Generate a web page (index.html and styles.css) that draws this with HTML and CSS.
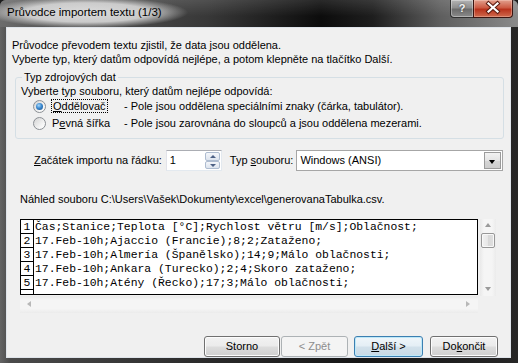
FILE: index.html
```html
<!DOCTYPE html>
<html lang="cs">
<head>
<meta charset="UTF-8" />
<meta name="viewport" content="width=device-width, initial-scale=1" />
<title>Průvodce importem textu (1/3)</title>
<link rel="stylesheet" href="styles.css">
</head>
<body>

<div class="window">
  <div class="titlebar">
    <span class="title">Průvodce importem textu (1/3)</span>
    <div class="caption-buttons">
      <span class="cap-help">?</span>
      <span class="cap-close">
        <svg width="40" height="18" viewBox="0 0 40 18">
          <path d="M15.5 4.5 L24.5 12.5 M24.5 4.5 L15.5 12.5" stroke="#5b1c12" stroke-width="4.2" stroke-linecap="square" />
          <path d="M15.5 4.5 L24.5 12.5 M24.5 4.5 L15.5 12.5" stroke="#ffffff" stroke-width="2.2" stroke-linecap="square" />
        </svg>
      </span>
    </div>
  </div>

  <div class="client">
    <div class="intro">
      <div>Průvodce převodem textu zjistil, že data jsou oddělena.</div>
      <div>Vyberte typ, který datům odpovídá nejlépe, a potom klepněte na tlačítko Další.</div>
    </div>

    <fieldset class="group">
      <legend>Typ zdrojových dat</legend>
      <div class="group-hint">Vyberte typ souboru, který datům nejlépe odpovídá:</div>
      <div class="option">
        <span class="radio checked"></span>
        <span class="opt-label"><span class="focus"><u>O</u>ddělovač</span></span>
        <span class="opt-desc">- Pole jsou oddělena speciálními znaky (čárka, tabulátor).</span>
      </div>
      <div class="option">
        <span class="radio"></span>
        <span class="opt-label">P<u>e</u>vná šířka</span>
        <span class="opt-desc">- Pole jsou zarovnána do sloupců a jsou oddělena mezerami.</span>
      </div>
    </fieldset>

    <div class="start-row">
      <span class="start-label"><u>Z</u>ačátek importu na řádku:</span>
      <div class="spin">
        <span class="spin-value">1</span>
        <div class="spin-buttons">
          <span class="spin-up"></span>
          <span class="spin-down"></span>
        </div>
      </div>
      <span class="type-label">Typ <u>s</u>ouboru:</span>
      <div class="combo">
        <span class="combo-value">Windows (ANSI)</span>
        <span class="combo-arrow"></span>
      </div>
    </div>

    <div class="preview-label">Náhled souboru C:\Users\Vašek\Dokumenty\excel\generovanaTabulka.csv.</div>

    <div class="preview">
      <div class="preview-main">
        <div class="preview-box">
          <div class="row"><span class="num">1</span><span class="line">Čas;Stanice;Teplota [°C];Rychlost větru [m/s];Oblačnost;</span></div>
          <div class="row"><span class="num">2</span><span class="line">17.Feb-10h;Ajaccio (Francie);8;2;Zataženo;</span></div>
          <div class="row"><span class="num">3</span><span class="line">17.Feb-10h;Almería (Španělsko);14;9;Málo oblačnosti;</span></div>
          <div class="row"><span class="num">4</span><span class="line">17.Feb-10h;Ankara (Turecko);2;4;Skoro zataženo;</span></div>
          <div class="row"><span class="num">5</span><span class="line">17.Feb-10h;Atény (Řecko);17;3;Málo oblačnosti;</span></div>
          <div class="row"><span class="num"></span><span class="line"></span></div>
        </div>
        <div class="hscroll">
          <span class="arrow-left"></span>
          <span class="arrow-right"></span>
        </div>
      </div>
      <div class="vscroll">
        <span class="arrow-up"></span>
        <span class="thumb"></span>
        <span class="arrow-down"></span>
      </div>
    </div>

    <div class="buttons">
      <span class="btn btn-cancel">Storno</span>
      <span class="btn btn-back disabled">&lt; Zpět</span>
      <span class="btn btn-next default"><u>D</u>alší &gt;</span>
      <span class="btn btn-finish">Do<u>k</u>ončit</span>
    </div>
  </div>
</div>

</body>
</html>
```

FILE: styles.css
```css
* {
  box-sizing: border-box;
}
body {
  margin: 0;
  background: #1c1c1c;
  font-family: "Liberation Sans", Arial, sans-serif;
  font-size: 11px;
  line-height: 13px;
  color: #000;
}
u {
  text-decoration-thickness: 1px;
  text-underline-offset: 1px;
}

/* window frame */
.window {
  width: 518px;
  height: 363px;
  display: flex;
  flex-direction: column;
  overflow: hidden;
  border-radius: 6px 6px 0 0;
  background: linear-gradient(to right, #646464 0, #4a4a4a 2%, #2a2a2a 40%, #151515 70%, #262626 100%);
}
.titlebar {
  height: 27px;
  flex: none;
  display: flex;
  justify-content: space-between;
  align-items: flex-start;
  position: relative;
  isolation: isolate;
  background:
    linear-gradient(to bottom, rgba(255,255,255,0.12), rgba(255,255,255,0) 60%),
    linear-gradient(to right, #6c6c6c 0, #5a5a5a 8%, #383838 40%, #0c0c0c 62%, #1e1e1e 72%, #5e5e5e 85%, #8a8a8a 100%);
}
.title {
  position: relative;
  margin: 5px 0 0 7px;
  font-size: 11.5px;
  line-height: 15px;
  color: #000;
}
.title::before {
  content: "";
  position: absolute;
  left: -22px;
  right: -26px;
  top: -8px;
  bottom: -8px;
  z-index: -1;
  background: radial-gradient(closest-side, rgba(222,222,222,0.98) 0, rgba(215,215,215,0.9) 62%, rgba(200,200,200,0) 100%);
}
.caption-buttons {
  display: flex;
  margin-right: 5px;
}
.cap-help {
  width: 23px;
  height: 18px;
  border: 1px solid #303030;
  border-top: none;
  border-right: none;
  border-radius: 0 0 0 4px;
  background: linear-gradient(to bottom, #b4b4b4 0, #8e8e8e 45%, #6c6c6c 55%, #8a8a8a 100%);
  box-shadow: inset 0 0 0 1px rgba(255,255,255,0.35);
  color: #f4f4f4;
  font-weight: bold;
  font-size: 11px;
  line-height: 17px;
  text-align: center;
  text-shadow: 0 0 2px #333;
}
.cap-close {
  width: 40px;
  height: 18px;
  border: 1px solid #3a1410;
  border-top: none;
  border-radius: 0 0 4px 0;
  background: linear-gradient(to bottom, #e2a08e 0, #cc5a43 45%, #b8321c 55%, #cf6a4e 100%);
  box-shadow: inset 0 0 0 1px rgba(255,220,210,0.35);
}
.cap-close svg {
  display: block;
  margin: -1px 0 0 -1px;
}

/* client area */
.client {
  flex: 1;
  margin: 0 7px 6px 6px;
  border: 1px solid #dfe4ea;
  background: #f0f0f0;
}
.intro {
  margin: 10px 0 0 5px;
  line-height: 14px;
}

.group {
  margin: 5px 6px 0 8px;
  padding: 1px 0 6px 5px;
  border: 1px solid #d5dfe5;
  border-radius: 3px;
  min-width: 0;
}
.group legend {
  padding: 0 2px;
  margin-left: 1px;
  line-height: 13px;
}
.group-hint {
  line-height: 13px;
}
.option {
  display: flex;
  align-items: center;
  height: 17px;
}
.radio {
  width: 13px;
  height: 13px;
  margin-left: 12px;
  border-radius: 50%;
  border: 1px solid #8b8f94;
  background: linear-gradient(135deg, #d4d4d4, #f6f6f6 70%, #ffffff);
  position: relative;
}
.radio.checked::after {
  content: "";
  position: absolute;
  left: 2px;
  top: 2px;
  width: 7px;
  height: 7px;
  border-radius: 50%;
  background: radial-gradient(circle at 40% 35%, #a6d8fb 0, #3d8ad0 45%, #134a86 100%);
}
.opt-label {
  width: 72px;
  margin-left: 6px;
}
.focus {
  outline: 1px dotted #000;
  outline-offset: 0;
  padding: 0 1px;
}

.start-row {
  display: flex;
  align-items: center;
  margin: 11px 0 0 27px;
  height: 21px;
}
.spin {
  display: flex;
  width: 56px;
  height: 21px;
  margin-left: 4px;
  background: #fff;
  border: 1px solid #abadb3;
  border-color: #abadb3 #e3e9ef #e3e9ef #e2e3ea;
}
.spin-value {
  flex: 1;
  padding: 3px 0 0 3px;
}
.spin-buttons {
  width: 16px;
  display: flex;
  flex-direction: column;
  padding: 1px 1px 1px 0;
}
.spin-up,
.spin-down {
  flex: 1;
  position: relative;
  border: 1px solid #aebcd0;
  border-radius: 2px;
  background: linear-gradient(to bottom, #f4f6fa, #dde4ee);
}
.spin-up::after,
.spin-down::after {
  content: "";
  position: absolute;
  left: 4px;
  top: 2px;
  border-left: 3px solid transparent;
  border-right: 3px solid transparent;
}
.spin-up::after {
  border-bottom: 3px solid #4d6185;
}
.spin-down::after {
  border-top: 3px solid #4d6185;
}
.type-label {
  margin-left: 8px;
}
.combo {
  display: flex;
  width: 207px;
  height: 21px;
  margin-left: 3px;
  background: #fff;
  border: 1px solid #a6a6a6;
}
.combo-value {
  flex: 1;
  padding: 3px 0 0 3px;
}
.combo-arrow {
  width: 17px;
  margin: 1px;
  position: relative;
  border: 1px solid #9b9b9b;
  background: linear-gradient(to bottom, #f2f2f2, #e4e4e4 50%, #d6d6d6 51%, #cdcdcd);
}
.combo-arrow::after {
  content: "";
  position: absolute;
  left: 4px;
  top: 7px;
  border-left: 3.5px solid transparent;
  border-right: 3.5px solid transparent;
  border-top: 4px solid #000;
}

.preview-label {
  margin: 22px 0 0 13px;
}

/* preview with scrollbars */
.preview {
  display: flex;
  margin: 13px 0 0 13px;
  width: 476px;
}
.preview-main {
  width: 458px;
}
.preview-box {
  height: 76px;
  overflow: hidden;
  border: 1px solid #000;
  background: #fff;
  font-family: "Liberation Mono", "Courier New", monospace;
  font-size: 11.4px;
}
.row {
  display: flex;
  height: 14px;
  line-height: 14px;
}
.num {
  width: 13px;
  flex: none;
  border-right: 1px solid #000;
  border-bottom: 1px solid #000;
  text-align: center;
  line-height: 14px;
}
.line {
  white-space: pre;
  padding-left: 1px;
}
.hscroll {
  height: 17px;
  margin-top: 1px;
  position: relative;
  background: linear-gradient(to bottom, #e9e9e9, #f5f5f5 25%, #f5f5f5 75%, #ebebeb);
}
.arrow-left,
.arrow-right {
  position: absolute;
  top: 5px;
  border-top: 3.5px solid transparent;
  border-bottom: 3.5px solid transparent;
}
.arrow-left {
  left: 7px;
  border-right: 4px solid #b8b8b8;
}
.arrow-right {
  right: 8px;
  border-left: 4px solid #b8b8b8;
}
.vscroll {
  width: 16px;
  height: 77px;
  margin-left: 2px;
  display: flex;
  flex-direction: column;
  align-items: center;
  background: linear-gradient(to right, #e9e9e9, #f5f5f5 25%, #f5f5f5 75%, #ebebeb);
}
.arrow-up,
.arrow-down {
  border-left: 3.5px solid transparent;
  border-right: 3.5px solid transparent;
}
.arrow-up {
  margin-top: 4px;
  border-bottom: 4px solid #9a9a9a;
}
.thumb {
  width: 14px;
  height: 15px;
  margin-top: 6px;
  border: 1px solid #979797;
  border-radius: 2px;
  background: linear-gradient(to right, #f2f2f2, #e6e6e6 50%, #d8d8d8 51%, #e0e0e0);
  box-shadow: inset 0 0 0 1px #f8f8f8;
}
.arrow-down {
  margin-top: auto;
  margin-bottom: 5px;
  border-top: 4px solid #9a9a9a;
}

/* dialog buttons */
.buttons {
  display: flex;
  justify-content: flex-end;
  margin: 23px 12px 0 0;
}
.btn {
  height: 21px;
  line-height: 19px;
  text-align: center;
  border: 1px solid #707070;
  border-radius: 3px;
  background: linear-gradient(to bottom, #f2f2f2 0, #ebebeb 48%, #dddddd 52%, #cfcfcf 100%);
  box-shadow: inset 0 0 0 1px #fcfcfc;
}
.btn-cancel {
  width: 76px;
}
.btn-back {
  width: 67px;
  margin-left: 1px;
}
.btn-next {
  width: 69px;
  margin-left: 6px;
}
.btn-finish {
  width: 68px;
  margin-left: 7px;
}
.btn.disabled {
  color: #8d8d8d;
  border-color: #adb2b5;
  background: #f4f4f4;
  box-shadow: none;
}
.btn.default {
  border-color: #3c7fb1;
  box-shadow: inset 0 0 0 1px #bde8f8;
  background: linear-gradient(to bottom, #f0f6fa 0, #e4eef5 48%, #d2e1eb 52%, #c8d9e5 100%);
}
```
